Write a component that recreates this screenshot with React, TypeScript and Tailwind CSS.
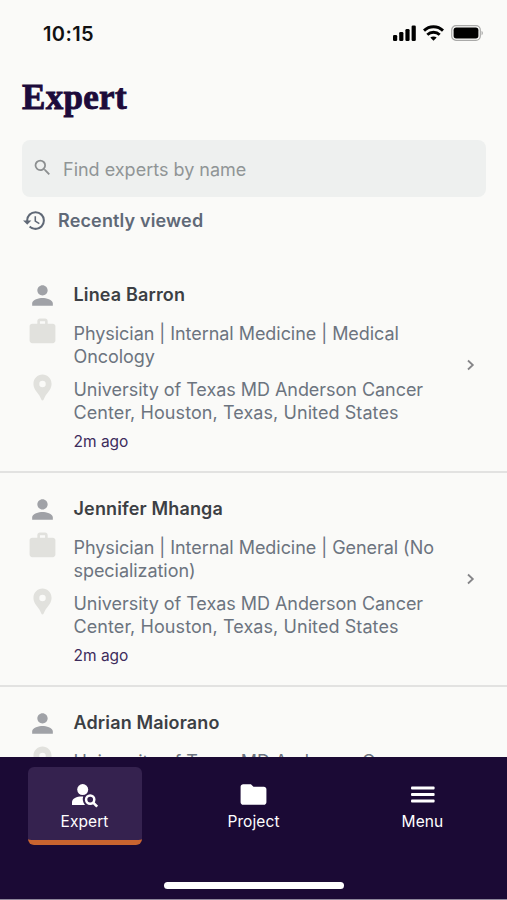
import React from 'react';
import {
    MdFolder,
    MdHistory,
    MdLocationPin,
    MdPerson,
    MdSearch,
    MdWork,
} from 'react-icons/md';

interface Expert {
    name: string;
    specialty?: string;
    institution: string;
    address: string;
    viewed: string;
}

const INSTITUTION = 'University of Texas MD Anderson Cancer';
const ADDRESS = 'Center, Houston, Texas, United States';

const experts: Expert[] = [
    {
        name: 'Linea Barron',
        specialty: 'Physician | Internal Medicine | Medical Oncology',
        institution: INSTITUTION,
        address: ADDRESS,
        viewed: '2m ago',
    },
    {
        name: 'Jennifer Mhanga',
        specialty: 'Physician | Internal Medicine | General (No specialization)',
        institution: INSTITUTION,
        address: ADDRESS,
        viewed: '2m ago',
    },
    {
        name: 'Adrian Maiorano',
        institution: INSTITUTION,
        address: ADDRESS,
        viewed: '2m ago',
    },
];

function StatusBar() {
    return (
        <div className="flex h-[66px] shrink-0 items-center justify-between pl-[43px] pr-6">
            <span className="mt-0.5 text-[20px] font-semibold leading-6 tracking-[0.4px] text-[#111]">10:15</span>
            <div className="flex items-center gap-[7px]">
                <svg width="23" height="16" viewBox="0 0 23 16" fill="#000">
                    <rect x="0" y="10" width="4.2" height="6" rx="1.3" />
                    <rect x="6.2" y="7" width="4.2" height="9" rx="1.3" />
                    <rect x="12.4" y="4" width="4.2" height="12" rx="1.3" />
                    <rect x="18.6" y="0.5" width="4.2" height="15.5" rx="1.3" />
                </svg>
                <svg width="21" height="16" viewBox="0 0 21 16" fill="none" stroke="#000" strokeWidth="2.9">
                    <path d="M1 5.6C6.3 0.5 14.7 0.5 20 5.6" />
                    <path d="M4.3 9.7C7.8 6.4 13.2 6.4 16.7 9.7" />
                    <path d="M10.5 15.8L7.3 12.6C9.1 11 11.9 11 13.7 12.6Z" fill="#000" stroke="none" />
                </svg>
                <svg width="32" height="16" viewBox="0 0 32 16">
                    <rect x="0.7" y="0.7" width="28.6" height="14.6" rx="4.3" fill="none" stroke="#a9a9a8" strokeWidth="1.2" />
                    <rect x="2.6" y="2.6" width="24.8" height="10.8" rx="2.6" fill="#000" />
                    <path d="M30.6 5.7C32.1 6.5 32.1 9.5 30.6 10.3Z" fill="#9a9a99" />
                </svg>
            </div>
        </div>
    );
}

function ExpertRow({ expert }: { expert: Expert }) {
    return (
        <li className="flex shrink-0 items-center border-b-2 border-[#e2e2e1] pb-[17px] pl-[26.5px] pr-[31px] pt-[23px]">
            <div className="flex-1">
                <div className="flex h-6 items-center gap-4">
                    <MdPerson className="mt-0.5 size-[31px] shrink-0 text-[#a0a2a7]" />
                    <h2 className="mt-0.5 text-[18px] font-semibold leading-6 tracking-[0.15px] text-[#3c3f44]">{expert.name}</h2>
                </div>
                {expert.specialty && (
                    <div className="mt-[15.5px] flex gap-4">
                        <MdWork className="-mt-1.5 size-[31px] shrink-0 text-[#e1e1dd]" />
                        <p className="w-[370px] text-[18px] leading-[23.5px] tracking-[-0.05px] text-[#6c747f]">
                            {expert.specialty}
                        </p>
                    </div>
                )}
                <div className={expert.specialty ? 'mt-[9px] flex gap-4' : 'mt-[15.5px] flex gap-4'}>
                    <MdLocationPin className="-mt-1.5 size-[31px] shrink-0 text-[#e1e1dd]" />
                    <p className="w-[370px] text-[18px] leading-[23.5px] text-[#6c747f]">
                        <span className="block tracking-[-0.04px]">{expert.institution}</span>
                        <span className="block tracking-[0.08px]">{expert.address}</span>
                    </p>
                </div>
                <p className="mt-[5.5px] pl-[47px] text-[15.5px] leading-6 text-[#3d2c5c]">{expert.viewed}</p>
            </div>
            <svg className="mb-1.5 shrink-0" width="10" height="12" viewBox="0 0 10 12" fill="none" stroke="#858588" strokeWidth="1.8">
                <path d="M2 1.5L6.8 6L2 10.5" />
            </svg>
        </li>
    );
}

function PersonSearchIcon() {
    return (
        <svg className="size-8" viewBox="0 0 32 32" fill="#fff">
            <circle cx="13.7" cy="10.6" r="5.5" />
            <path d="M14.2 17.6C13.3 19.9 13.6 23.4 16 26H3V23.4C3 19.2 8.6 17.2 14.2 17.6Z" />
            <circle cx="21.2" cy="20.6" r="4.1" fill="none" stroke="#fff" strokeWidth="2.5" />
            <path d="M24.2 23.6L28.2 27.6" stroke="#fff" strokeWidth="2.7" />
        </svg>
    );
}

function MenuIcon() {
    return (
        <svg className="size-8" viewBox="0 0 32 32" fill="#fff">
            <rect x="4" y="7.6" width="23.6" height="3" rx="1" />
            <rect x="4" y="14" width="23.6" height="3" rx="1" />
            <rect x="4" y="20.4" width="23.6" height="3" rx="1" />
        </svg>
    );
}

function NavItem({ label, icon, active = false }: { label: string; icon: React.ReactNode; active?: boolean }) {
    return (
        <button
            className={
                active
                    ? 'flex h-[78px] w-[114px] flex-col items-center rounded-md border-b-[5px] border-[#c9642f] bg-[#35224f] pt-3'
                    : 'flex h-[78px] w-[114px] flex-col items-center pt-3'
            }
        >
            {icon}
            <span className="mt-px text-[15.5px] leading-5 tracking-[0.1px] text-white">{label}</span>
        </button>
    );
}

export default function App() {
    return (
        <div className="flex h-[900px] w-[507px] flex-col overflow-hidden bg-[#fafaf8] font-['Inter',sans-serif]">
            <StatusBar />

            <header className="shrink-0 px-[22px]">
                <h1 className="h-[74px] pt-3 font-['Liberation_Serif',serif] text-[35px] font-bold leading-10 tracking-[0.3px] text-[#1d0b3b] [-webkit-text-stroke:0.9px_#1d0b3b]">
                    Expert
                </h1>
                <div className="flex h-[57px] w-[464px] items-center gap-[10px] rounded-lg bg-[#eef0ef] pl-[10px]">
                    <MdSearch className="mb-0.5 size-[21px] text-[#8c8f90]" />
                    <span className="mt-0.5 text-[18px] leading-6 text-[#909596]">Find experts by name</span>
                </div>
                <div className="flex h-[62px] gap-[11px] pt-[11px]">
                    <MdHistory className="size-[25px] text-[#5f6876]" />
                    <span className="pt-px text-[18px] font-semibold leading-6 tracking-[0.15px] text-[#606977]">Recently viewed</span>
                </div>
            </header>

            <ul className="flex min-h-0 flex-1 flex-col overflow-hidden">
                {experts.map((expert) => (
                    <ExpertRow key={expert.name} expert={expert} />
                ))}
            </ul>

            <nav className="flex h-[143px] shrink-0 flex-col items-center justify-between border-b border-[#8f879b] bg-[#1b0a35] pb-[10px] pt-[10px]">
                <div className="grid w-full grid-cols-3 justify-items-center">
                    <NavItem label="Expert" icon={<PersonSearchIcon />} active />
                    <NavItem label="Project" icon={<MdFolder className="mb-px size-[31px] text-white" />} />
                    <NavItem label="Menu" icon={<MenuIcon />} />
                </div>
                <div className="h-[7px] w-[180px] rounded-full bg-white" />
            </nav>
        </div>
    );
}
